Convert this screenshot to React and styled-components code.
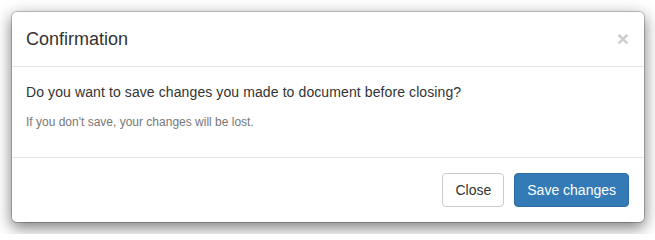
import React from 'react';
import styled, { createGlobalStyle } from 'styled-components';

const GlobalStyle = createGlobalStyle`
  html, body {
    margin: 0;
    padding: 0;
    background: #fff;
  }
  body {
    font-family: "Liberation Sans", Arial, Helvetica, sans-serif;
    font-size: 14px;
    line-height: 1.42857143;
    color: #333;
  }
  * {
    box-sizing: border-box;
  }
`;

const Dialog = styled.div`
  margin: 11px 10px 11px 11px;
  width: 634px;
`;

const Content = styled.div`
  background-color: #fff;
  border: 1px solid rgba(0, 0, 0, 0.2);
  border-radius: 6px;
  box-shadow: 0 5px 15px rgba(0, 0, 0, 0.5);
  background-clip: padding-box;
`;

const Header = styled.div`
  display: flex;
  align-items: center;
  justify-content: space-between;
  padding: 15px 15px 15px 14px;
  border-bottom: 1px solid #e5e5e5;
`;

const Title = styled.h4`
  margin: 0;
  font-size: 18px;
  font-weight: 500;
  line-height: 24px;
  color: #333;
`;

const CloseX = styled.button`
  padding: 0;
  margin-top: -2px;
  background: transparent;
  border: 0;
  font-family: inherit;
  font-size: 21px;
  font-weight: bold;
  line-height: 1;
  color: #000;
  opacity: 0.2;
  cursor: pointer;
`;

const Body = styled.div`
  padding: 15px 15px 15px 14px;
`;

const Text = styled.p`
  margin: 0 0 10px;
  line-height: 20px;
  color: ${(p) => (p.muted ? '#777' : '#333')};
  font-size: ${(p) => (p.muted ? '12px' : '14px')};
  letter-spacing: ${(p) => (p.muted ? '0' : '0.1px')};
`;

const Footer = styled.div`
  display: flex;
  justify-content: flex-end;
  gap: 10px;
  padding: 15px;
  border-top: 1px solid #e5e5e5;
`;

const Button = styled.button`
  display: inline-block;
  height: 34px;
  padding: 6px 12px;
  font-family: inherit;
  font-size: 14px;
  line-height: 20px;
  border-radius: 4px;
  cursor: pointer;
  border: 1px solid ${(p) => (p.primary ? '#2e6da4' : '#ccc')};
  background-color: ${(p) => (p.primary ? '#337ab7' : '#fff')};
  color: ${(p) => (p.primary ? '#fff' : '#333')};
`;

const App = () => (
  <>
    <GlobalStyle />
    <Dialog>
      <Content>
        <Header>
          <Title>Confirmation</Title>
          <CloseX aria-label="Close">&times;</CloseX>
        </Header>
        <Body>
          <Text>Do you want to save changes you made to document before closing?</Text>
          <Text muted>If you don't save, your changes will be lost.</Text>
        </Body>
        <Footer>
          <Button>Close</Button>
          <Button primary>Save changes</Button>
        </Footer>
      </Content>
    </Dialog>
  </>
);

export default App;
